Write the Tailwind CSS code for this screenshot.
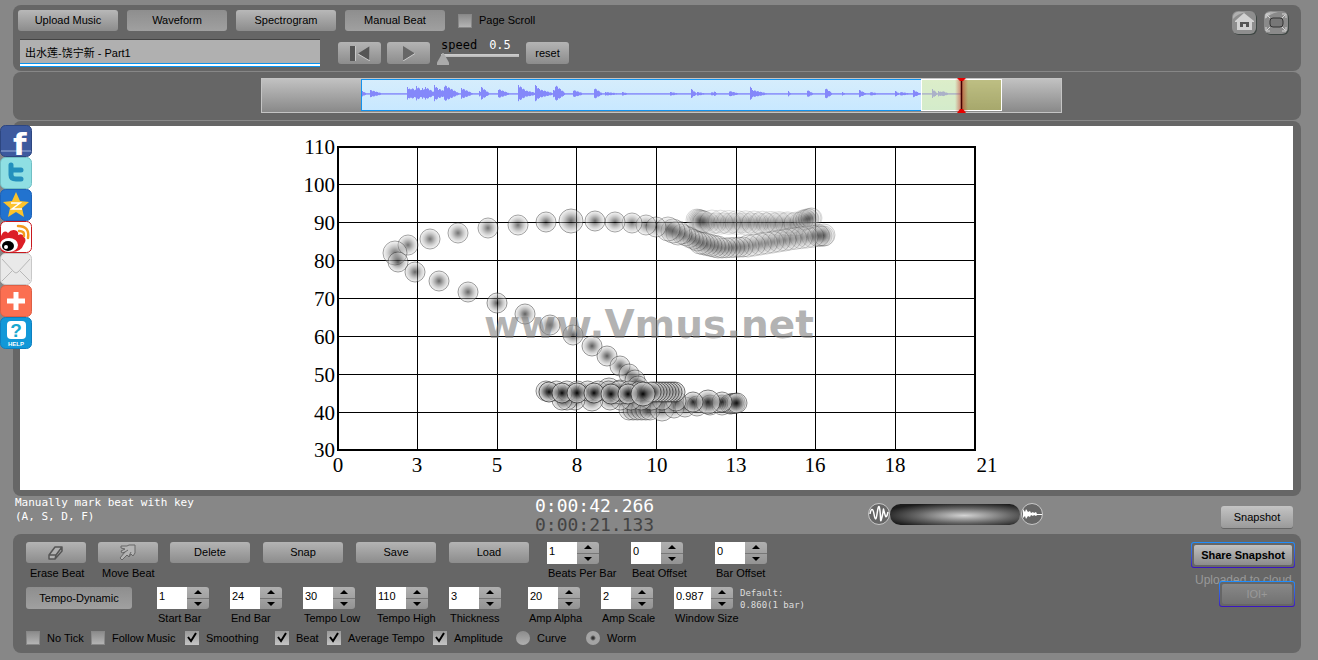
<!DOCTYPE html>
<html lang="zh">
  <head>
    <meta charset="utf-8" />
    <title>Vmus.net</title>
    <script src="https://cdn.jsdelivr.net/npm/@tailwindcss/browser@4"></script>
    <script>
      const ROW_ONE = [
        { id: 'beats-per-bar', label: 'Beats Per Bar', value: '1' },
        { id: 'beat-offset', label: 'Beat Offset', value: '0' },
        { id: 'bar-offset', label: 'Bar Offset', value: '0' },
      ];
      const ROW_TWO = [
        { id: 'start-bar', label: 'Start Bar', value: '1' },
        { id: 'end-bar', label: 'End Bar', value: '24' },
        { id: 'tempo-low', label: 'Tempo Low', value: '30' },
        { id: 'tempo-high', label: 'Tempo High', value: '110' },
        { id: 'thickness', label: 'Thickness', value: '3', cell: 'w-[79px]' },
        { id: 'amp-alpha', label: 'Amp Alpha', value: '20' },
        { id: 'amp-scale', label: 'Amp Scale', value: '2' },
        { id: 'window-size', label: 'Window Size', value: '0.987', cell: 'w-[66px]', input: 'w-[37px]' },
      ];

      function stepper(item, cell) {
        return `
          <div class="${item.cell || cell} shrink-0">
            <div class="flex h-[22px]">
              <input id="${item.id}" value="${item.value}" class="${item.input || 'w-[30px]'} h-[22px] bg-white pl-0.5 pb-1 text-[11px] outline-none" />
              <div class="flex w-[22px] flex-col divide-y divide-[#777] overflow-hidden rounded-r-[3px] bg-linear-to-b from-[#b0b0b0] to-[#939393]">
                <button aria-label="${item.label} up" class="flex flex-1 items-center justify-center"><svg width="8" height="4"><path d="M4 0L8 4H0z"/></svg></button>
                <button aria-label="${item.label} down" class="flex flex-1 items-center justify-center"><svg width="8" height="4"><path d="M4 4L8 0H0z"/></svg></button>
              </div>
            </div>
            <label for="${item.id}" class="mt-px block whitespace-nowrap pl-px leading-4">${item.label}</label>
          </div>`;
      }

      // attack position, height, decay length
      const BURSTS = [
        [362, 3, 5], [370, 4, 14], [407, 7, 9], [411, 6, 14], [416, 8, 10], [422, 6, 10], [425, 7, 12], [434, 9, 9], [439, 5, 12], [444, 9, 16],
        [461, 6, 13], [479, 3, 8], [481, 7, 9], [498, 5, 13], [518, 9, 12], [523, 4, 18], [535, 9, 9], [538, 5, 18], [553, 4, 8], [555, 9, 11],
        [573, 4, 12], [594, 6, 9], [605, 2, 20], [622, 2, 8], [670, 2, 12], [691, 5, 6], [697, 2, 12], [711, 2, 6], [714, 3, 3], [729, 3, 12],
        [750, 9, 3], [752, 4, 18], [788, 3, 3], [807, 4, 7], [825, 6, 8], [842, 2, 4], [859, 4, 8], [870, 2, 12], [895, 3, 5], [900, 2, 14],
        [913, 4, 8], [932, 5, 6], [938, 3, 10], [942, 3, 8],
      ];

      function wavePath() {
        let d = '';
        for (let x = 362; x < 961; x++) {
          let amp = 0.8;
          BURSTS.forEach(([start, height, decay]) => {
            if (x >= start && x < start + decay) {
              amp = Math.max(amp, height * (1 - (x - start) / decay) * (x % 3 === 0 ? 0.8 : 1));
            }
          });
          d += `M${x + 0.5} ${94 - amp}V${94 + amp * 0.8}`;
        }
        return d;
      }

      // every dot of the worm: [x, y, radius, opacity], oldest first
      function wormPoints() {
        const pts = [];
        const run = (x1, y1, x2, y2, n, r, o) => {
          for (let i = 0; i < n; i++) {
            const t = n === 1 ? 0 : i / (n - 1);
            pts.push([x1 + (x2 - x1) * t, y1 + (y2 - y1) * t, r, o]);
          }
        };
        run(812, 218, 800, 222, 5, 10, 0.2);
        run(794, 223, 702, 223, 14, 10, 0.2);
        run(697, 220, 704, 222, 6, 11, 0.24);
        run(712, 222, 796, 224, 11, 12, 0.2);
        run(803, 220, 811, 218, 4, 10, 0.24);
        run(818, 236, 824, 236, 4, 10, 0.28);
        run(824, 235, 790, 239, 7, 11, 0.3);
        run(785, 240, 748, 246, 7, 11, 0.34);
        run(743, 247, 722, 248, 6, 10, 0.38);
        run(718, 247, 700, 243, 6, 11, 0.4);
        run(697, 241, 682, 234, 5, 10, 0.42);
        run(678, 233, 668, 229, 3, 12, 0.45);
        pts.push(
          [656, 227, 10, 0.5], [646, 225, 10, 0.5], [632, 223, 10, 0.52], [615, 222, 10, 0.55], [595, 221, 10, 0.58],
          [571, 221, 12, 0.6], [546, 222, 10, 0.58], [518, 225, 10, 0.55], [488, 228, 10, 0.55], [458, 233, 10, 0.55],
          [430, 239, 10, 0.55], [408, 245, 10, 0.55], [395, 253, 12, 0.55], [398, 262, 10, 0.6], [415, 272, 10, 0.6],
          [439, 281, 10, 0.6], [468, 292, 10, 0.6], [497, 303, 10, 0.64], [525, 314, 10, 0.62], [550, 325, 10, 0.62],
          [573, 335, 10, 0.62], [592, 346, 10, 0.64], [607, 356, 10, 0.64], [620, 366, 10, 0.64], [629, 374, 10, 0.64],
          [635, 380, 10, 0.64], [638, 386, 10, 0.64], [640, 392, 10, 0.64]
        );
        run(629, 410, 650, 410, 6, 10, 0.6);
        pts.push([662, 409, 12, 0.6], [674, 408, 10, 0.6], [685, 407, 10, 0.6], [697, 406, 10, 0.6], [710, 405, 10, 0.6], [722, 405, 10, 0.6]);
        run(730, 404, 737, 403, 5, 10, 0.7);
        pts.push([722, 402, 10, 0.75], [708, 402, 12, 0.8], [693, 402, 10, 0.8], [676, 401, 10, 0.7]);
        run(662, 400, 610, 400, 6, 10, 0.7);
        pts.push([592, 400, 11, 0.7], [575, 400, 10, 0.7], [567, 400, 10, 0.7], [562, 400, 10, 0.7]);
        run(609, 390, 620, 392, 2, 12, 0.7);
        run(546, 391, 640, 391, 10, 10, 0.7);
        run(675, 392, 651, 392, 9, 10, 0.85);
        pts.push([549, 392, 10, 0.95], [562, 393, 10, 0.96], [577, 393, 10, 0.97], [594, 393, 10, 0.98], [611, 394, 10, 0.99], [628, 394, 10, 1], [643, 394, 12, 1]);
        return pts;
      }

      document.addEventListener('DOMContentLoaded', function () {
        document.getElementById('steppers-one').innerHTML = ROW_ONE.map((i) => stepper(i, 'w-[84px]')).join('');
        document.getElementById('steppers-two').innerHTML = ROW_TWO.map((i) => stepper(i, 'w-[73px]')).join('');
        document.getElementById('wave').setAttribute('d', wavePath());
        document.getElementById('worm').innerHTML = wormPoints()
          .map(([x, y, r, o]) => `<circle cx="${x}" cy="${y}" r="${r}" opacity="${o}"/>`)
          .join('');

        let grid = '';
        for (let i = 1; i < 8; i++) {
          grid += `M338 ${146.5 + i * 38}H975M${Math.floor(338 + i * 79.6) + 0.5} 147V450`;
        }
        document.getElementById('grid').setAttribute('d', grid);
        document.getElementById('y-labels').innerHTML = [110, 100, 90, 80, 70, 60, 50, 40, 30]
          .map((n, i) => `<text x="335" y="${154 + i * 38 - (i === 8 ? 1 : 0)}">${n}</text>`)
          .join('');
        document.getElementById('x-labels').innerHTML = [[338, 0], [417, 3], [497, 5], [577, 8], [657, 10], [736, 13], [815, 16], [895, 18], [987, 21]]
          .map(([x, n]) => `<text x="${x}" y="472">${n}</text>`)
          .join('');
      });
    </script>
  </head>
  <body class="relative min-h-screen bg-[#878787] pt-[5px] pr-[17px] pb-[7px] pl-[13px] font-['Liberation_Sans','Noto_Sans_CJK_SC',sans-serif] text-[11px] text-black">
    <!-- Toolbar -->
    <header class="flex justify-between rounded-lg bg-[#666] pt-[5px] pr-3 pb-1 pl-[5px]">
      <div class="flex flex-col gap-2">
        <div class="flex items-center gap-[9px]">
          <button class="h-[21px] w-[100px] rounded-[3px] bg-linear-to-b from-[#b8b8b8] to-[#8c8c8c]">Upload Music</button>
          <button class="h-[21px] w-[100px] rounded-[3px] bg-linear-to-b from-[#8e8e8e] to-[#a0a0a0]">Waveform</button>
          <button class="h-[21px] w-[100px] rounded-[3px] bg-linear-to-b from-[#b8b8b8] to-[#8c8c8c]">Spectrogram</button>
          <button class="h-[21px] w-[100px] rounded-[3px] bg-linear-to-b from-[#8e8e8e] to-[#a0a0a0]">Manual Beat</button>
          <label class="ml-1 flex items-center gap-[7px]"><input type="checkbox" class="size-[14px] appearance-none border border-[#888] bg-linear-to-b from-[#8c8c8c] to-[#b4b4b4]" />Page Scroll</label>
        </div>
        <div class="flex items-center pl-0.5">
          <input aria-label="Track" value="出水莲-饶宁新 - Part1" class="h-7 w-[300px] border-t border-[#444] bg-[#b0b0b0] px-[5px] pb-1 text-[11px] shadow-[inset_0_-1px_#0a94f0,inset_0_-3px_#fff,inset_0_-4px_#0a94f0] outline-none" />
          <button aria-label="Rewind" class="ml-[18px] flex h-[22px] w-[43px] items-center justify-center rounded-[3px] bg-linear-to-b from-[#b4b4b4] to-[#8c8c8c]">
            <svg width="20" height="15"><path d="M0 0H5V15H0zM20 0V15L8 7.500z" fill="#555"/><path d="M5.500 0V15M8 8L20 15V0" fill="none" stroke="#c8c8c8"/></svg>
          </button>
          <button aria-label="Play" class="ml-1.5 flex h-[22px] w-[43px] items-center justify-center rounded-[3px] bg-linear-to-b from-[#b4b4b4] to-[#8c8c8c]">
            <svg width="14" height="15"><path d="M1 0V15L13 7.500z" fill="#666"/><path d="M1 15L13 7.500" stroke="#ccc"/></svg>
          </button>
          <div class="ml-[7px] w-[85px]">
            <label for="speed" class="flex gap-3 pl-1 font-['DejaVu_Sans_Mono',monospace] text-[12px] leading-3">speed <span class="text-white">0.5</span></label>
            <input id="speed" type="range" min="0" max="100" value="0" class="block h-4 w-[83px] appearance-none bg-[linear-gradient(#d0d0d0,#b8b8b8)] bg-size-[78px_3px] bg-position-[4px_3px] bg-no-repeat [&::-webkit-slider-thumb]:h-3 [&::-webkit-slider-thumb]:w-3 [&::-webkit-slider-thumb]:appearance-none [&::-webkit-slider-thumb]:bg-[#aaa] [&::-webkit-slider-thumb]:[clip-path:polygon(45%_0,55%_0,100%_80%,100%_100%,0_100%,0_80%)]" />
          </div>
          <button class="ml-1 h-[22px] w-[43px] rounded-[3px] bg-linear-to-b from-[#b4b4b4] to-[#8c8c8c]">reset</button>
        </div>
      </div>
      <div class="flex gap-[7px]">
        <button aria-label="Home" class="size-[25px]">
          <svg viewBox="0 0 25 25"><rect x="1" y="2" width="24" height="23" rx="6" fill="#3f4744"/><rect x="0" y="1" width="24" height="23" rx="6" fill="#8e8e8e"/><path d="M1 6Q3 1 9 2L14 2Q5 4 1 9z" fill="#b0b0b0"/><path d="M12 3L22 11V12H20V20H5V12H3V11z" fill="#d2d2d2"/><path d="M8 17V12H17V17H14V14H11V17z" fill="#555"/></svg>
        </button>
        <button aria-label="Full screen" class="size-[25px]">
          <svg viewBox="0 0 25 25"><rect x="1" y="2" width="24" height="23" rx="6" fill="#3f4744"/><rect x="0" y="1" width="24" height="23" rx="6" fill="#8a8a8a"/><path d="M1 6Q3 1 9 2L14 2Q5 4 1 9z" fill="#b0b0b0"/><rect x="6" y="8" width="13" height="9" rx="3" fill="#777" stroke="#333"/><path d="M2 8V4H6M18 4H22V8M2 17V21H6M18 21H22V17M3 5L6 8M21 5L18 8M3 20L6 17M21 20L18 17" fill="none" stroke="#d6d6d6"/></svg>
        </button>
      </div>
    </header>

    <!-- Track overview -->
    <section class="mt-px h-12 rounded-lg bg-[#666] pt-1.5 pl-[248px]">
      <svg width="801" height="35" viewBox="261 78 801 35">
        <defs>
          <linearGradient id="bar" x2="0" y2="1"><stop stop-color="#c2c2c2"/><stop offset="1" stop-color="#888"/></linearGradient>
          <linearGradient id="sky" x2="0" y2="1"><stop stop-color="#d6edfc"/><stop offset="1" stop-color="#c8e8ff"/></linearGradient>
          <linearGradient id="glow"><stop stop-color="#d03020" stop-opacity="0"/><stop offset=".5" stop-color="#c03020" stop-opacity=".6"/><stop offset="1" stop-color="#d03020" stop-opacity="0"/></linearGradient>
        </defs>
        <rect x="261.500" y="78.500" width="800" height="34" fill="url(#bar)" stroke="#c4c4c4"/>
        <rect x="361.500" y="79.500" width="600" height="31" fill="url(#sky)" stroke="#1292ee"/>
        <path id="wave" stroke="#8488fa"/>
        <rect x="921.500" y="79.500" width="80" height="31" fill="#e6f07c" fill-opacity=".4" stroke="#fff"/>
        <rect x="962" y="80" width="39" height="30" fill="#8a8420" fill-opacity=".25"/>
        <rect x="955" y="79" width="13" height="33" fill="url(#glow)"/>
        <path d="M961.500 79V112" stroke="#400" stroke-width="1.500"/>
        <path d="M957 78H966L963 81H960zM957 113H966L963 109H960z" fill="#e80000"/>
      </svg>
    </section>

    <!-- Worm chart -->
    <main class="mt-px rounded-lg bg-[#666] pt-[5px] pr-2 pb-1.5 pl-[7px]">
      <div class="flex justify-center bg-white">
        <svg width="713" height="364" viewBox="300 126 713 364">
          <defs>
            <radialGradient id="dot">
              <stop stop-color="#000"/><stop offset=".3" stop-color="#444" stop-opacity=".9"/><stop offset=".65" stop-color="#999" stop-opacity=".75"/><stop offset="1" stop-color="#eaeaea" stop-opacity=".7"/>
            </radialGradient>
          </defs>
          <path id="grid" stroke="#000" shape-rendering="crispEdges"/>
          <rect x="338" y="147" width="637" height="303" fill="none" stroke="#000" stroke-width="2" shape-rendering="crispEdges"/>
          <g id="worm" fill="url(#dot)" stroke="#333" stroke-width=".8"></g>
          <text x="484" y="338" font-family="DejaVu Sans" font-weight="bold" font-size="39" fill="#808080" fill-opacity=".6">www.Vmus.net</text>
          <g id="y-labels" font-family="Liberation Serif" font-size="21" text-anchor="end"></g>
          <g id="x-labels" font-family="Liberation Serif" font-size="21" text-anchor="middle"></g>
        </svg>
      </div>
    </main>

    <!-- Status line -->
    <section class="flex h-[38px] items-start font-['DejaVu_Sans_Mono',monospace]">
      <p class="w-[522px] shrink-0 pl-0.5 text-[11px] leading-[14px] text-white">Manually mark beat with key<br />(A, S, D, F)</p>
      <div class="w-[333px] shrink-0 text-[18px] leading-[19px]">
        <p class="text-white">0:00:42.266</p>
        <p class="text-[#444]">0:00:21.133</p>
      </div>
      <div class="flex items-center pt-[7px]">
        <svg width="22" height="23"><circle cx="11" cy="11" r="10.500" fill="#666" stroke="#c8c8c8"/><path d="M2 11C3 5 5 5 6 11S8 18 9 11S11 0 12 8S12 22 14 14S15 4 16 8S18 18 20 9" fill="none" stroke="#fff" stroke-width="1.500"/></svg>
        <input type="range" aria-label="Volume mix" class="h-[21px] w-[130px] appearance-none rounded-full bg-[radial-gradient(ellipse_at_57%_55%,#d4d4d4,#666_45%,#1c1c1c_80%)] [&::-webkit-slider-thumb]:appearance-none" />
        <svg width="23" height="23"><circle cx="12" cy="11" r="10.500" fill="#666" stroke="#c8c8c8"/><path d="M3 6L5 9L6 6L8 9L10 8L11 10L13 9L14 10L16 9L17 11H22V12H17L16 13L14 12L13 13L11 12L10 14L8 13L6 16L5 13L3 15z" fill="#fff"/></svg>
      </div>
      <button class="mt-2.5 mr-2 ml-auto h-[22px] w-[72px] rounded-[3px] bg-linear-to-b from-[#c4c4c4] to-[#9a9a9a] font-['Liberation_Sans',sans-serif] shadow-[0_1px_#666]">Snapshot</button>
    </section>

    <!-- Settings -->
    <footer class="flex justify-between rounded-lg bg-[#666] pt-2 pr-1.5 pb-[7px] pl-[13px]">
      <div>
        <div class="flex">
          <div class="w-[72px]">
            <button aria-label="Erase Beat" class="flex h-[21px] w-[60px] items-center justify-center rounded-[3px] bg-linear-to-b from-[#b4b4b4] to-[#8c8c8c]">
              <svg width="18" height="16" fill="#b0b0b0" stroke="#555" stroke-width="1.500" stroke-linejoin="round"><path d="M2 10L8 2H15L9 10zM2 10V14H8L9 10M8 14L15 6V2"/></svg>
            </button>
            <p class="mt-0.5 pl-1 leading-4 whitespace-nowrap">Erase Beat</p>
          </div>
          <div class="w-[72px]">
            <button aria-label="Move Beat" class="flex h-[21px] w-[60px] items-center justify-center rounded-[3px] bg-linear-to-b from-[#b4b4b4] to-[#8c8c8c]">
              <svg width="18" height="17" fill="#b4b4b4" stroke="#666" stroke-linejoin="round"><path d="M2 2H8L10 1H16V9L14 12L12 10L10 13L8 11L3 16L1 14L6 8L3 9L2 7L6 5L2 4z"/><path d="M6 8L9 6M10 12L12 8" fill="none"/></svg>
            </button>
            <p class="mt-0.5 pl-1 leading-4 whitespace-nowrap">Move Beat</p>
          </div>
          <div class="w-[93px]"><button class="h-[21px] w-20 rounded-[3px] bg-linear-to-b from-[#b4b4b4] to-[#8c8c8c]">Delete</button></div>
          <div class="w-[93px]"><button class="h-[21px] w-20 rounded-[3px] bg-linear-to-b from-[#b4b4b4] to-[#8c8c8c]">Snap</button></div>
          <div class="w-[93px]"><button class="h-[21px] w-20 rounded-[3px] bg-linear-to-b from-[#b4b4b4] to-[#8c8c8c]">Save</button></div>
          <div class="w-[98px]"><button class="h-[21px] w-20 rounded-[3px] bg-linear-to-b from-[#b4b4b4] to-[#8c8c8c]">Load</button></div>
          <div id="steppers-one" class="flex"></div>
        </div>
        <div class="mt-1.5 flex">
          <div class="w-[131px]"><button class="h-[22px] w-[106px] rounded-[3px] bg-linear-to-b from-[#8e8e8e] to-[#a0a0a0]">Tempo-Dynamic</button></div>
          <div id="steppers-two" class="flex"></div>
          <p class="font-['DejaVu_Sans_Mono',monospace] text-[9px] leading-3 text-[#ddd]">Default:<br />0.860(1 bar)</p>
        </div>
        <div class="mt-1 flex h-4 items-center">
          <label class="flex w-[65px] items-center gap-[7px] whitespace-nowrap"><input type="checkbox" class="size-[14px] appearance-none border border-[#888] bg-linear-to-b from-[#8c8c8c] to-[#b4b4b4]" />No Tick</label>
          <label class="flex w-[94px] items-center gap-[7px] whitespace-nowrap"><input type="checkbox" class="size-[14px] appearance-none border border-[#888] bg-linear-to-b from-[#8c8c8c] to-[#b4b4b4]" />Follow Music</label>
          <label class="flex w-[90px] items-center gap-[7px] whitespace-nowrap"><span class="relative flex"><input type="checkbox" checked class="size-[14px] appearance-none bg-linear-to-b from-[#999] to-[#c4c4c4]" /><svg class="absolute inset-0" width="14" height="14"><path d="M3 6L6 10L11 2" fill="none" stroke="#000" stroke-width="2"/></svg></span>Smoothing</label>
          <label class="flex w-[52px] items-center gap-[7px] whitespace-nowrap"><span class="relative flex"><input type="checkbox" checked class="size-[14px] appearance-none bg-linear-to-b from-[#999] to-[#c4c4c4]" /><svg class="absolute inset-0" width="14" height="14"><path d="M3 6L6 10L11 2" fill="none" stroke="#000" stroke-width="2"/></svg></span>Beat</label>
          <label class="flex w-[106px] items-center gap-[7px] whitespace-nowrap"><span class="relative flex"><input type="checkbox" checked class="size-[14px] appearance-none bg-linear-to-b from-[#999] to-[#c4c4c4]" /><svg class="absolute inset-0" width="14" height="14"><path d="M3 6L6 10L11 2" fill="none" stroke="#000" stroke-width="2"/></svg></span>Average Tempo</label>
          <label class="flex w-[83px] items-center gap-[7px] whitespace-nowrap"><span class="relative flex"><input type="checkbox" checked class="size-[14px] appearance-none bg-linear-to-b from-[#999] to-[#c4c4c4]" /><svg class="absolute inset-0" width="14" height="14"><path d="M3 6L6 10L11 2" fill="none" stroke="#000" stroke-width="2"/></svg></span>Amplitude</label>
          <label class="flex w-[70px] items-center gap-[7px] whitespace-nowrap"><input type="radio" name="shape" class="size-[14px] appearance-none rounded-full bg-linear-to-b from-[#8c8c8c] to-[#b0b0b0]" />Curve</label>
          <label class="flex items-center gap-[7px] whitespace-nowrap"><input type="radio" name="shape" checked class="size-[14px] appearance-none rounded-full bg-[radial-gradient(circle,#333_1px,#a4a4a4_3px)]" />Worm</label>
        </div>
      </div>
      <div class="flex w-[104px] flex-col items-end">
        <div class="h-[26px] w-[104px] shrink-0 rounded-[3px] bg-linear-to-b from-[#1e90ff] to-[#3a10c0] p-px">
          <div class="h-full rounded-xs bg-[#666] p-0.5"><button class="h-full w-full rounded-xs bg-linear-to-b from-[#c0c0c0] to-[#8c8c8c] font-bold whitespace-nowrap">Share Snapshot</button></div>
        </div>
        <p class="mt-1 h-[9px] w-[100px] text-[12px] leading-4 whitespace-nowrap text-[#999]">Uploaded to cloud.</p>
        <div class="h-[26px] w-[76px] shrink-0 rounded-[3px] bg-linear-to-b from-[#1e90ff] to-[#3a10c0] p-px">
          <div class="h-full rounded-xs bg-[#666] p-0.5"><button disabled class="h-full w-full rounded-xs bg-linear-to-b from-[#888] to-[#727272] text-[#999]">IOI+</button></div>
        </div>
      </div>
    </footer>

    <!-- Share links float over the left edge -->
    <nav class="absolute top-[125px] left-0 flex w-8 flex-col">
      <a href="#" aria-label="Facebook"><svg width="32" height="32"><rect x=".5" y=".5" width="31" height="31" rx="5" fill="#3d5a9e" stroke="#2d4680"/><path d="M1 26H31" stroke="#6d86bd" stroke-width="2"/><text x="13" y="30" font-family="DejaVu Sans" font-weight="bold" font-size="31" fill="#fff">f</text></svg></a>
      <a href="#" aria-label="Twitter"><svg width="32" height="32"><rect x=".5" y=".5" width="31" height="31" rx="5" fill="#8fdfe3" stroke="#70bfc4"/><path d="M11 8V18Q11 22 16 22H21M11 13H21" fill="none" stroke="#2490bd" stroke-width="5" stroke-linecap="round"/></svg></a>
      <a href="#" aria-label="Qzone"><svg width="32" height="32"><rect x=".5" y=".5" width="31" height="31" rx="5" fill="#2273cf" stroke="#1d62b8"/><path d="M16 3L20 12L29 13L22 19L24 28L16 23L8 28L10 19L3 13L12 12z" fill="#fcc32c"/><path d="M11 14L20 14L12 20H22" fill="none" stroke="#fff" stroke-width="1.500"/></svg></a>
      <a href="#" aria-label="Weibo"><svg width="32" height="32"><rect x=".5" y=".5" width="31" height="31" rx="5" fill="#fff" stroke="#c8181e"/><path d="M1 15Q4 8 8 12Q12 7 17 10Q19 12 18 14Q23 12 24 16Q27 19 24 23Q21 31 12 31H3L1 28z" fill="#dc1f26"/><ellipse cx="9" cy="24" rx="9" ry="7" fill="#fff"/><ellipse cx="8" cy="25" rx="6" ry="5"/><circle cx="6" cy="26" r="2" fill="#fff"/><path d="M18 5Q30 5 28 17M19 10Q25 10 24 15" fill="none" stroke="#f39a1e" stroke-width="2.500" stroke-linecap="round"/></svg></a>
      <a href="#" aria-label="Mail"><svg width="32" height="32"><rect x=".5" y=".5" width="31" height="31" rx="5" fill="#e9e9e9" stroke="#c8c8c8"/><path d="M2 6L14 19Q16 21 18 19L30 6M2 28L12 18M30 28L20 18" fill="none" stroke="#b8b8b8"/></svg></a>
      <a href="#" aria-label="More"><svg width="32" height="32"><rect x=".5" y=".5" width="31" height="31" rx="5" fill="#fb6f51" stroke="#dd5f45"/><path d="M16 7V25M7 16H25" stroke="#fff" stroke-width="5"/></svg></a>
      <a href="#" aria-label="Help"><svg width="32" height="32"><rect x=".5" y=".5" width="31" height="31" rx="5" fill="#1298d8" stroke="#0d7fc0"/><rect x="7" y="4" width="19" height="18" rx="4" fill="#fff"/><text x="16" y="20" text-anchor="middle" font-family="Liberation Sans" font-weight="bold" font-size="19" fill="#18a8d0">?</text><text x="16" y="29" text-anchor="middle" font-family="Liberation Sans" font-weight="bold" font-size="6" fill="#fff">HELP</text></svg></a>
    </nav>
  </body>
</html>
